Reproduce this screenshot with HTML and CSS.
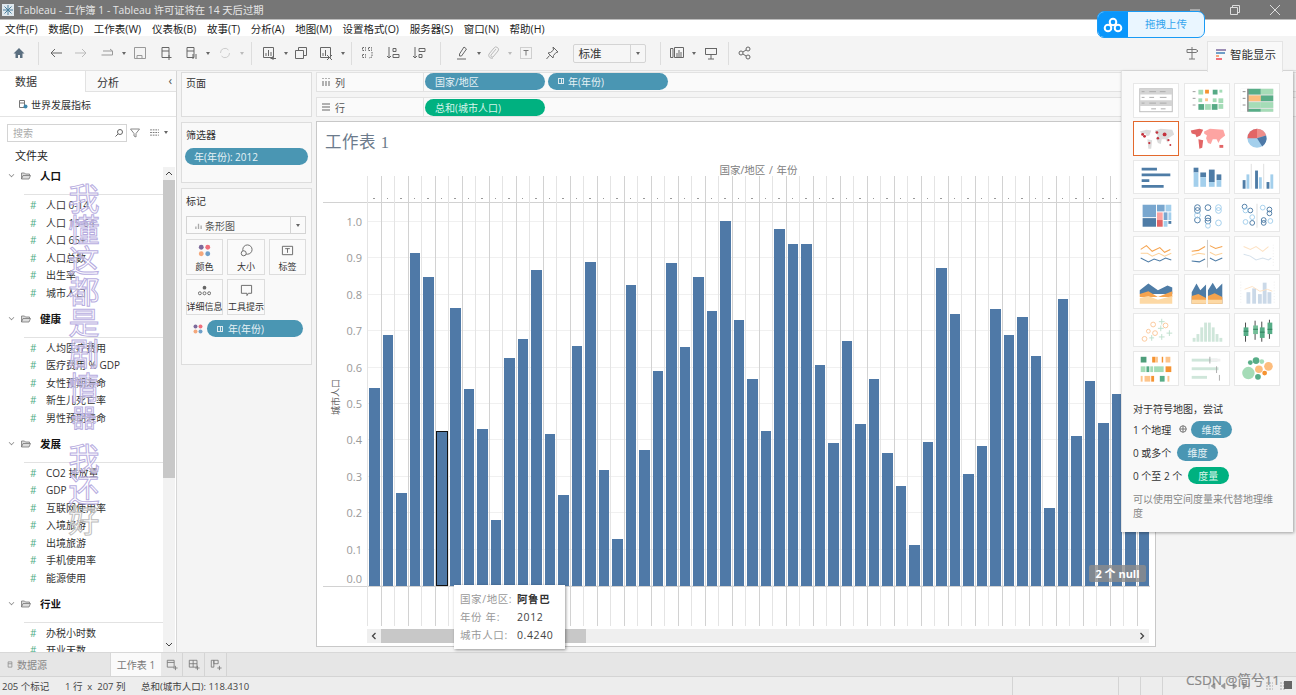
FILE: index.html
```html
<!DOCTYPE html>
<html lang="zh">
<head>
<meta charset="utf-8">
<title>Tableau - 工作簿 1</title>
<link rel="stylesheet" href="styles.css">
</head>
<body>
<div class="app">
  <header class="titlebar">
    <svg class="appicon" viewBox="0 0 12 12"><rect width="12" height="12" fill="#dfe8ee"/><path d="M6 1v10M1 6h10M2.5 2.5l7 7M9.500 2.500l-7 7" stroke="#4a7f9c" stroke-width="1"/></svg>
    <span class="titletext">Tableau - 工作簿 1 - Tableau 许可证将在 14 天后过期</span>
    <div class="winctl">
      <svg class="winbtn" viewBox="0 0 12 12"><path d="M1 6h10" stroke="#ddd"/></svg>
      <svg class="winbtn" viewBox="0 0 12 12"><path d="M1.500 3.500h7v7h-7zM3.500 3.500v-2h7v7h-2" fill="none" stroke="#ddd"/></svg>
      <svg class="winbtn" viewBox="0 0 12 12"><path d="M1 1l10 10M11 1L1 11" stroke="#ddd"/></svg>
    </div>
  </header>
  <nav class="menubar">
    <span>文件(F)</span><span>数据(D)</span><span>工作表(W)</span><span>仪表板(B)</span><span>故事(T)</span><span>分析(A)</span><span>地图(M)</span><span>设置格式(O)</span><span>服务器(S)</span><span>窗口(N)</span><span>帮助(H)</span>
  </nav>
  <div class="toolbar">
    <span class="tb home"><svg viewBox="0 0 14 14"><path d="M7 2L1.500 7.500H3.500V12H6V9h2v3h2.500V7.500h2z" fill="#5b6f80"/></svg></span>
    <i class="sep"></i>
    <span class="tb"><svg viewBox="0 0 14 14"><path d="M13 7H2M6 3L2 7l4 4" fill="none" stroke="#666"/></svg></span>
    <span class="tb"><svg viewBox="0 0 14 14"><path d="M1 7h11M8 3l4 4-4 4" fill="none" stroke="#bbb"/></svg></span>
    <span class="tb"><svg viewBox="0 0 14 14"><path d="M3 5h9.500v4H1.500M10 3l2.500 2" fill="none" stroke="#999"/></svg></span><b class="cr"></b>
    <span class="tb"><svg viewBox="0 0 14 14"><path d="M1.500 1.500h11v11h-11zM4 12.500v-3h5v3" fill="none" stroke="#999"/></svg></span>
    <span class="tb"><svg viewBox="0 0 14 14"><path d="M3 1.500h7v10H3zM3 5h7M10 9v5M7.500 11.500h5" fill="none" stroke="#666"/></svg></span>
    <span class="tb"><svg viewBox="0 0 14 14"><path d="M3 1.500h7v10H3zM3 5h7M9 8v5M12 8v5" fill="none" stroke="#666"/></svg></span><b class="cr"></b>
    <span class="tb"><svg viewBox="0 0 14 14"><path d="M2.500 7a4.500 4.500 0 0 1 8-3M11.500 7a4.500 4.500 0 0 1-8 3" fill="none" stroke="#ccc"/></svg></span><b class="cr lt"></b>
    <i class="sep s2"></i>
    <span class="tb"><svg viewBox="0 0 14 14"><path d="M1.500 1.500h10v10h-10zM4 10V7M6.500 10V4M9 10V6M11 10v4.500M8.500 12.500h5.500" fill="none" stroke="#666"/></svg></span><b class="cr"></b>
    <span class="tb tight"><svg viewBox="0 0 14 14"><path d="M1.500 4.500h8v8h-8zM4.500 4.500v-3h8v8h-3" fill="none" stroke="#666"/></svg></span>
    <span class="tb"><svg viewBox="0 0 14 14"><path d="M1.500 1.500h10v10h-10zM4 10V7M6.500 10V4M8 9l5 5M13 9l-5 5" fill="none" stroke="#666"/></svg></span><b class="cr"></b>
    <i class="sep s3"></i>
    <span class="tb"><svg viewBox="0 0 14 14"><path d="M1.500 1.500h3v3h-3zM7.500 1.500h3v3h-3zM1.500 8.500h3v3h-3zM11 6v5l-3 1" fill="none" stroke="#666" stroke-dasharray="1.500 1"/></svg></span>
    <span class="tb"><svg viewBox="0 0 14 14"><path d="M3 1v11M1 10l2 2 2-2M7 2.500h3v3H7zM7 8.500h6v3H7z" fill="none" stroke="#666"/></svg></span>
    <span class="tb"><svg viewBox="0 0 14 14"><path d="M3 1v11M1 10l2 2 2-2M7 2.500h6v3H7zM7 8.500h3v3H7z" fill="none" stroke="#666"/></svg></span>
    <i class="sep s4"></i>
    <span class="tb"><svg viewBox="0 0 14 14"><path d="M9 1l2.500 2-5 7H4.500V8zM2 13h9" fill="none" stroke="#666"/></svg></span><b class="cr"></b>
    <span class="tb tight3"><svg viewBox="0 0 14 14"><path d="M10 3L5 9a1.500 1.500 0 0 0 2 2l5-6a2.500 2.500 0 0 0-4-3L3 8a3 3 0 0 0 4 4" fill="none" stroke="#bbb"/></svg></span><b class="cr lt"></b>
    <span class="tb"><svg viewBox="0 0 14 14"><path d="M1.500 1.500h11v11h-11z" fill="none" stroke="#aaa" stroke-dasharray="1 1"/><path d="M4.500 4.500h5M7 4.500v5" fill="none" stroke="#777"/></svg></span>
    <span class="tb"><svg viewBox="0 0 14 14"><path d="M8 1l5 5-2 .5-2.500 3-.5 2.500-5-5 2.500-.5 3-2.500zM4.500 9.500L1.500 13" fill="none" stroke="#666"/></svg></span>
    <div class="combo"><span class="combotext">标准</span><span class="combocaret"><b class="cr"></b></span></div>
    <i class="sep"></i>
    <span class="tb"><svg viewBox="0 0 14 14"><path d="M.5 2.500h2.500v9H.5zM4.500 1.500h9v10h-9zM7 11V7M9 11V4M11 11V6" fill="none" stroke="#666"/></svg></span><b class="cr"></b>
    <span class="tb"><svg viewBox="0 0 14 14"><path d="M1.500 2.500h11v6h-11zM7 8.500V13M4 13h6M1 2.500h12" fill="none" stroke="#666"/></svg></span>
    <i class="sep"></i>
    <span class="tb"><svg viewBox="0 0 14 14"><circle cx="3" cy="7" r="2" fill="none" stroke="#666"/><circle cx="10" cy="3" r="2" fill="none" stroke="#666"/><circle cx="10" cy="11" r="2" fill="none" stroke="#666"/><path d="M5 6l3-2M5 8l3 2" stroke="#666"/></svg></span>
    <span class="tb signpost"><svg viewBox="0 0 14 14"><path d="M7 1v12M4 13h6M2 3.500h9l2 1.500-2 1.500H2z" fill="none" stroke="#777"/></svg></span>
  </div>

  <main class="workspace">
    <aside class="datapane">
      <div class="panetabs"><span class="ptab on">数据</span><span class="ptab">分析</span><span class="pcollapse">‹</span></div>
      <div class="source">
        <svg class="srcicon" viewBox="0 0 10 10"><path d="M1.500 1.500h5v7h-5zM1.500 4h5" fill="none" stroke="#777"/><circle cx="7.500" cy="7.500" r="2" fill="#3e87ad"/></svg>
        世界发展指标
      </div>
      <div class="searchrow">
        <div class="search"><span>搜索</span>
          <svg viewBox="0 0 10 10"><circle cx="6" cy="4" r="2.500" fill="none" stroke="#666"/><path d="M4 6L1.500 8.500" stroke="#666"/></svg>
        </div>
        <svg class="funnel" viewBox="0 0 10 10"><path d="M.5 1h9L6 5.500V9L4 8V5.500z" fill="none" stroke="#888"/></svg>
        <svg class="viewicon" viewBox="0 0 10 8"><path d="M0 1h2M3 1h7M0 4h2M3 4h7M0 7h2M3 7h7" stroke="#666" stroke-dasharray="2 1"/></svg>
        <b class="cr"></b>
      </div>
      <div class="folderhead">文件夹</div>
      <div class="treewrap">
        <div class="tree">
          <section class="group">
            <h3 class="ghead"><i class="chev"></i><svg class="folder" viewBox="0 0 10 8"><path d="M.5 7V1h3l1 1h4v1.500M.5 7l1.500-3.500h7.500L8 7z" fill="#ddd" stroke="#777" stroke-width=".8"/></svg>人口</h3>
            <ul class="items"><li>人口 0-14</li><li>人口 15-64</li><li>人口 65+</li><li>人口总数</li><li>出生率</li><li>城市人口</li></ul>
          </section>
          <section class="group">
            <h3 class="ghead"><i class="chev"></i><svg class="folder" viewBox="0 0 10 8"><path d="M.5 7V1h3l1 1h4v1.500M.5 7l1.500-3.500h7.500L8 7z" fill="#ddd" stroke="#777" stroke-width=".8"/></svg>健康</h3>
            <ul class="items"><li>人均医疗费用</li><li>医疗费用 % GDP</li><li>女性预期寿命</li><li>新生儿死亡率</li><li>男性预期寿命</li></ul>
          </section>
          <section class="group">
            <h3 class="ghead"><i class="chev"></i><svg class="folder" viewBox="0 0 10 8"><path d="M.5 7V1h3l1 1h4v1.500M.5 7l1.500-3.500h7.500L8 7z" fill="#ddd" stroke="#777" stroke-width=".8"/></svg>发展</h3>
            <ul class="items"><li>CO2 排放量</li><li>GDP</li><li>互联网使用率</li><li>入境旅游</li><li>出境旅游</li><li>手机使用率</li><li>能源使用</li></ul>
          </section>
          <section class="group">
            <h3 class="ghead"><i class="chev"></i><svg class="folder" viewBox="0 0 10 8"><path d="M.5 7V1h3l1 1h4v1.500M.5 7l1.500-3.500h7.500L8 7z" fill="#ddd" stroke="#777" stroke-width=".8"/></svg>行业</h3>
            <ul class="items"><li>办税小时数</li><li>开业天数</li></ul>
          </section>
        </div>
        <div class="vscroll">
          <svg viewBox="0 0 8 5"><path d="M1 4l3-3 3 3" fill="none" stroke="#444"/></svg>
          <div class="vtrack"><div class="vthumb"></div></div>
          <svg viewBox="0 0 8 5"><path d="M1 1l3 3 3-3" fill="none" stroke="#444"/></svg>
        </div>
      </div>
    </aside>

    <div class="cardrail">
      <section class="card pages"><h4>页面</h4></section>
      <section class="card filters"><h4>筛选器</h4><div class="pill blue filterpill">年(年份): 2012</div></section>
      <section class="card marks">
        <h4>标记</h4>
        <div class="marktype">
          <svg viewBox="0 0 8 8"><path d="M1 8V5M4 8V2M7 8V4" stroke="#aaa" stroke-width="1.500"/></svg>
          <span>条形图</span><span class="mtcaret"><b class="cr"></b></span>
        </div>
        <div class="markgrid">
          <div class="mbtn"><svg viewBox="0 0 14 14"><circle cx="3.500" cy="3.500" r="2.600" fill="#7d6a9b"/><circle cx="10.500" cy="3.500" r="2.600" fill="#ef6f7c"/><circle cx="3.500" cy="10.500" r="2.600" fill="#f4a87c"/><circle cx="10.500" cy="10.500" r="2.600" fill="#6f9fc8"/></svg>颜色</div>
          <div class="mbtn"><svg viewBox="0 0 14 14"><circle cx="8" cy="6" r="5" fill="none" stroke="#666"/><circle cx="4" cy="10" r="2.700" fill="#f9f9f9" stroke="#666"/></svg>大小</div>
          <div class="mbtn"><svg viewBox="0 0 14 14"><path d="M1.500 2.500h11v9h-11z" fill="none" stroke="#666"/><path d="M4.500 5h5M7 5v4.500" stroke="#666"/></svg>标签</div>
          <div class="mbtn"><svg viewBox="0 0 14 14"><circle cx="7" cy="4" r="2" fill="#666"/><circle cx="2" cy="10" r="1.600" fill="none" stroke="#666"/><circle cx="7" cy="10" r="1.600" fill="none" stroke="#666"/><circle cx="12" cy="10" r="1.600" fill="none" stroke="#666"/></svg>详细信息</div>
          <div class="mbtn"><svg viewBox="0 0 14 14"><path d="M1.500 1.500h11v8.500H9L7.500 12.500V10h-6z" fill="none" stroke="#666"/></svg>工具提示</div>
        </div>
        <div class="markpill">
          <svg viewBox="0 0 10 10"><circle cx="2.500" cy="2.500" r="2" fill="#7d6a9b"/><circle cx="7.500" cy="2.500" r="2" fill="#ef6f7c"/><circle cx="2.500" cy="7.500" r="2" fill="#f4a87c"/><circle cx="7.500" cy="7.500" r="2" fill="#6f9fc8"/></svg>
          <div class="pill blue mp"><i class="plus"></i>年(年份)</div>
        </div>
      </section>
    </div>

    <div class="center">
      <div class="shelf first"><div class="shelflabel"><svg viewBox="0 0 8 8"><path d="M1 3v5M4 3v5M7 3v5M1 0v1M4 0v1M7 0v1" stroke="#666"/></svg>列</div>
        <div class="pill blue shelfpill">国家/地区</div><div class="pill blue shelfpill"><i class="plus"></i>年(年份)</div></div>
      <div class="shelf"><div class="shelflabel"><svg viewBox="0 0 8 8"><path d="M0 1h8M0 4h8M0 7h8" stroke="#666"/></svg>行</div>
        <div class="pill green shelfpill">总和(城市人口)</div></div>

      <section class="sheet">
        <h2 class="sheettitle">工作表 1</h2>
        <div class="headtitle">国家/地区 <em>/</em> 年份</div>
        <div class="chart">
          <div class="yaxis">
            <div class="yhead"></div>
            <div class="yplot">
              <span class="ytitle">城市人口</span>
              <div class="yticks"><span>1.0</span><span>0.9</span><span>0.8</span><span>0.7</span><span>0.6</span><span>0.5</span><span>0.4</span><span>0.3</span><span>0.2</span><span>0.1</span><span class="zero">0.0</span></div>
            </div>
            <div class="yfoot"></div>
          </div>
          <div class="cols">
            <div class="col"><div class="dot"></div><div class="plot"><div class="bar" style="height:198px"></div></div><div class="foot"></div></div>
            <div class="col"><div class="dot"></div><div class="plot"><div class="bar" style="height:251px"></div></div><div class="foot"></div></div>
            <div class="col"><div class="dot"></div><div class="plot"><div class="bar" style="height:93px"></div></div><div class="foot"></div></div>
            <div class="col"><div class="dot"></div><div class="plot"><div class="bar" style="height:333px"></div></div><div class="foot"></div></div>
            <div class="col"><div class="dot"></div><div class="plot"><div class="bar" style="height:309px"></div></div><div class="foot"></div></div>
            <div class="col"><div class="dot"></div><div class="plot"><div class="bar sel" style="height:155px"></div></div><div class="foot"></div></div>
            <div class="col"><div class="dot"></div><div class="plot"><div class="bar" style="height:278px"></div></div><div class="foot"></div></div>
            <div class="col"><div class="dot"></div><div class="plot"><div class="bar" style="height:197px"></div></div><div class="foot"></div></div>
            <div class="col"><div class="dot"></div><div class="plot"><div class="bar" style="height:157px"></div></div><div class="foot"></div></div>
            <div class="col"><div class="dot"></div><div class="plot"><div class="bar" style="height:66px"></div></div><div class="foot"></div></div>
            <div class="col"><div class="dot"></div><div class="plot"><div class="bar" style="height:228px"></div></div><div class="foot"></div></div>
            <div class="col"><div class="dot"></div><div class="plot"><div class="bar" style="height:247px"></div></div><div class="foot"></div></div>
            <div class="col"><div class="dot"></div><div class="plot"><div class="bar" style="height:316px"></div></div><div class="foot"></div></div>
            <div class="col"><div class="dot"></div><div class="plot"><div class="bar" style="height:152px"></div></div><div class="foot"></div></div>
            <div class="col"><div class="dot"></div><div class="plot"><div class="bar" style="height:91px"></div></div><div class="foot"></div></div>
            <div class="col"><div class="dot"></div><div class="plot"><div class="bar" style="height:240px"></div></div><div class="foot"></div></div>
            <div class="col"><div class="dot"></div><div class="plot"><div class="bar" style="height:324px"></div></div><div class="foot"></div></div>
            <div class="col"><div class="dot"></div><div class="plot"><div class="bar" style="height:116px"></div></div><div class="foot"></div></div>
            <div class="col"><div class="dot"></div><div class="plot"><div class="bar" style="height:47px"></div></div><div class="foot"></div></div>
            <div class="col"><div class="dot"></div><div class="plot"><div class="bar" style="height:301px"></div></div><div class="foot"></div></div>
            <div class="col"><div class="dot"></div><div class="plot"><div class="bar" style="height:136px"></div></div><div class="foot"></div></div>
            <div class="col"><div class="dot"></div><div class="plot"><div class="bar" style="height:215px"></div></div><div class="foot"></div></div>
            <div class="col"><div class="dot"></div><div class="plot"><div class="bar" style="height:323px"></div></div><div class="foot"></div></div>
            <div class="col"><div class="dot"></div><div class="plot"><div class="bar" style="height:239px"></div></div><div class="foot"></div></div>
            <div class="col"><div class="dot"></div><div class="plot"><div class="bar" style="height:309px"></div></div><div class="foot"></div></div>
            <div class="col"><div class="dot"></div><div class="plot"><div class="bar" style="height:275px"></div></div><div class="foot"></div></div>
            <div class="col"><div class="dot"></div><div class="plot"><div class="bar" style="height:365px"></div></div><div class="foot"></div></div>
            <div class="col"><div class="dot"></div><div class="plot"><div class="bar" style="height:266px"></div></div><div class="foot"></div></div>
            <div class="col"><div class="dot"></div><div class="plot"><div class="bar" style="height:207px"></div></div><div class="foot"></div></div>
            <div class="col"><div class="dot"></div><div class="plot"><div class="bar" style="height:155px"></div></div><div class="foot"></div></div>
            <div class="col"><div class="dot"></div><div class="plot"><div class="bar" style="height:357px"></div></div><div class="foot"></div></div>
            <div class="col"><div class="dot"></div><div class="plot"><div class="bar" style="height:342px"></div></div><div class="foot"></div></div>
            <div class="col"><div class="dot"></div><div class="plot"><div class="bar" style="height:342px"></div></div><div class="foot"></div></div>
            <div class="col"><div class="dot"></div><div class="plot"><div class="bar" style="height:221px"></div></div><div class="foot"></div></div>
            <div class="col"><div class="dot"></div><div class="plot"><div class="bar" style="height:143px"></div></div><div class="foot"></div></div>
            <div class="col"><div class="dot"></div><div class="plot"><div class="bar" style="height:245px"></div></div><div class="foot"></div></div>
            <div class="col"><div class="dot"></div><div class="plot"><div class="bar" style="height:162px"></div></div><div class="foot"></div></div>
            <div class="col"><div class="dot"></div><div class="plot"><div class="bar" style="height:207px"></div></div><div class="foot"></div></div>
            <div class="col"><div class="dot"></div><div class="plot"><div class="bar" style="height:133px"></div></div><div class="foot"></div></div>
            <div class="col"><div class="dot"></div><div class="plot"><div class="bar" style="height:100px"></div></div><div class="foot"></div></div>
            <div class="col"><div class="dot"></div><div class="plot"><div class="bar" style="height:41px"></div></div><div class="foot"></div></div>
            <div class="col"><div class="dot"></div><div class="plot"><div class="bar" style="height:144px"></div></div><div class="foot"></div></div>
            <div class="col"><div class="dot"></div><div class="plot"><div class="bar" style="height:318px"></div></div><div class="foot"></div></div>
            <div class="col"><div class="dot"></div><div class="plot"><div class="bar" style="height:272px"></div></div><div class="foot"></div></div>
            <div class="col"><div class="dot"></div><div class="plot"><div class="bar" style="height:112px"></div></div><div class="foot"></div></div>
            <div class="col"><div class="dot"></div><div class="plot"><div class="bar" style="height:140px"></div></div><div class="foot"></div></div>
            <div class="col"><div class="dot"></div><div class="plot"><div class="bar" style="height:277px"></div></div><div class="foot"></div></div>
            <div class="col"><div class="dot"></div><div class="plot"><div class="bar" style="height:251px"></div></div><div class="foot"></div></div>
            <div class="col"><div class="dot"></div><div class="plot"><div class="bar" style="height:269px"></div></div><div class="foot"></div></div>
            <div class="col"><div class="dot"></div><div class="plot"><div class="bar" style="height:230px"></div></div><div class="foot"></div></div>
            <div class="col"><div class="dot"></div><div class="plot"><div class="bar" style="height:78px"></div></div><div class="foot"></div></div>
            <div class="col"><div class="dot"></div><div class="plot"><div class="bar" style="height:287px"></div></div><div class="foot"></div></div>
            <div class="col"><div class="dot"></div><div class="plot"><div class="bar" style="height:150px"></div></div><div class="foot"></div></div>
            <div class="col"><div class="dot"></div><div class="plot"><div class="bar" style="height:205px"></div></div><div class="foot"></div></div>
            <div class="col"><div class="dot"></div><div class="plot"><div class="bar" style="height:163px"></div></div><div class="foot"></div></div>
            <div class="col"><div class="dot"></div><div class="plot"><div class="bar" style="height:192px"></div></div><div class="foot"></div></div>
            <div class="col"><div class="dot"></div><div class="plot"><div class="bar" style="height:180px"></div></div><div class="foot"></div></div>
            <div class="col"><div class="dot"></div><div class="plot"><div class="bar" style="height:170px"></div></div><div class="foot"></div></div>
          </div>
          <div class="nullbadge">2 个 null</div>
        </div>
        <div class="hscroll">
          <span class="harrow"><svg viewBox="0 0 6 8"><path d="M4.500 1L1.500 4l3 3" fill="none" stroke="#444" stroke-width="1.300"/></svg></span>
          <div class="hthumb"></div>
          <span class="harrow end"><svg viewBox="0 0 6 8"><path d="M1.500 1l3 3-3 3" fill="none" stroke="#444" stroke-width="1.300"/></svg></span>
        </div>
      </section>
    </div>
  </main>

  <div class="tabbar">
    <span class="dstab"><svg viewBox="0 0 8 10"><path d="M1.500 1.500h5v7h-5zM1.500 4h5" fill="none" stroke="#888"/></svg>数据源</span>
    <span class="sheettab">工作表 1</span>
    <span class="newtab"><svg viewBox="0 0 14 14"><path d="M1.500 1.500h8v8h-8zM1.500 4h8M11 8v5M8.500 10.500h5" fill="none" stroke="#777"/></svg></span>
    <span class="newtab"><svg viewBox="0 0 14 14"><path d="M1.500 1.500h9v8h-9zM1.500 5.500h9M6 1.500v8M11 8v5M8.500 10.500h5" fill="none" stroke="#777"/></svg></span>
    <span class="newtab"><svg viewBox="0 0 14 14"><path d="M1.500 1.500h3v8h-3zM4.500 1.500h5v4h-5zM11 8v5M8.500 10.500h5" fill="none" stroke="#777"/></svg></span>
  </div>
  <footer class="statusbar">
    <span class="st1">205 个标记</span><span class="st2">1 行  x  207 列</span><span class="st3">总和(城市人口): 118.4310</span>
    <span class="stsp"></span><i class="stdiv d1"></i><i class="stdiv d2"></i><i class="stdiv d3"></i><i class="stdiv d4"></i>
    <svg class="stnav" viewBox="0 0 78 8"><path d="M1 1v6M7 1L3 4l4 3zM17 1l-4 3 4 3zM25 1l4 3-4 3zM35 1l4 3-4 3zM41 1v6" fill="#999" stroke="#999" stroke-width=".6"/><path d="M58 1h7M58 4h7M58 7h7M72 1h6M72 4h6M72 7h6" stroke="#aaa" stroke-dasharray="2 1"/></svg>
    <span class="stsquare"></span>
  </footer>

  <!-- overlays -->
  <div class="upload">
    <span class="upicon"><svg viewBox="0 0 20 16"><circle cx="10" cy="5" r="3.300" fill="none" stroke="#fff" stroke-width="2"/><circle cx="5" cy="11" r="3.300" fill="none" stroke="#fff" stroke-width="2"/><circle cx="15" cy="11" r="3.300" fill="none" stroke="#fff" stroke-width="2"/></svg></span>
    <span class="uptext">拖拽上传</span>
  </div>

  <aside class="showme">
    <div class="smtab"><svg viewBox="0 0 10 12"><path d="M0 1h10V3H0z" fill="#9c8db5"/><path d="M0 4h9v2H0z" fill="#6f9fc8"/><path d="M0 7h3v2H0z" fill="#f4a87c"/><path d="M0 10h6v2H0z" fill="#ef6f7c"/></svg>智能显示</div>
    <div class="smbody">
      <div class="tiles">
        <div class="tile"><svg viewBox="0 0 46 34"><rect x="6" y="5" width="34" height="24" fill="#fff" stroke="#bbb"/><rect x="6" y="5" width="34" height="6" fill="#d4d4d4"/><rect x="6" y="17" width="34" height="6" fill="#d4d4d4"/><path d="M8 8h3M16 8h7M27 8h6M8 14h3M16 14h5M27 14h7M8 20h3M16 20h7M27 20h7M18 26h5M28 26h5" stroke="#aaa"/></svg></div>
        <div class="tile"><svg viewBox="0 0 46 34"><path d="M8 8h3M8 15h3M8 22h3" stroke="#999"/><rect x="14" y="6" width="5" height="5" fill="#a5dcb7"/><rect x="21" y="6" width="4" height="4" fill="#f59331"/><rect x="29" y="6" width="5" height="5" fill="#55aa85"/><rect x="36" y="6" width="3" height="3" fill="#a5dcb7"/><rect x="14" y="15" width="4" height="4" fill="#a5dcb7"/><rect x="21" y="15" width="3" height="3" fill="#fdc58c"/><rect x="29" y="15" width="4" height="4" fill="#a5dcb7"/><rect x="35" y="15" width="5" height="5" fill="#a5dcb7"/><rect x="14" y="21" width="6" height="6" fill="#55aa85"/><rect x="21" y="21" width="6" height="6" fill="#a5dcb7"/><rect x="28" y="21" width="6" height="6" fill="#55aa85"/><rect x="35" y="21" width="5" height="5" fill="#a5dcb7"/></svg></div>
        <div class="tile"><svg viewBox="0 0 46 34"><rect x="6" y="5" width="34" height="24" fill="#e4e4e4"/><rect x="14" y="5" width="13" height="6" fill="#57ad87"/><rect x="27" y="5" width="13" height="6" fill="#a5dcb7"/><rect x="14" y="12" width="13" height="6" fill="#fdbd7d"/><rect x="27" y="12" width="13" height="6" fill="#57ad87"/><rect x="14" y="19" width="13" height="6" fill="#a5dcb7"/><rect x="27" y="19" width="13" height="6" fill="#a5dcb7"/><rect x="14" y="26" width="13" height="3" fill="#57ad87"/><rect x="27" y="26" width="13" height="3" fill="#a5dcb7"/><rect x="6" y="5" width="7" height="24" fill="#fff"/><path d="M13.500 5v24" stroke="#555"/><path d="M8 8h3M8 15h3M8 22h3" stroke="#888"/></svg></div>
        <div class="tile selected"><svg viewBox="0 0 46 34"><path d="M6 10l7-2 5 1-2 5-3 1-1-3-3 1zM14 18l5 1-1 9-3 0zM22 9l6-2 12 1 2 5-6 4-1 5-2-4-4 0-1 5-3-1-2-5 2-3-3-3z" fill="#dcdcdc"/><g fill="#c4323d"><circle cx="9" cy="13" r="1.500"/><circle cx="11" cy="15" r="1.500"/><circle cx="24" cy="11" r="1.400"/><circle cx="32" cy="13" r="2"/><circle cx="25" cy="17" r="1.300"/><circle cx="16" cy="22" r="1.200"/><circle cx="38" cy="24" r="1"/><circle cx="36" cy="19" r="1.200"/></g></svg></div>
        <div class="tile"><svg viewBox="0 0 46 34"><path d="M6 9l9-2 4 1-3 6-4 2-1-3-4-1z" fill="#e26566"/><path d="M14 18l5 1-1 8-3 1z" fill="#e26566"/><path d="M20 10l6-3 14 1 2 6-5 4-2 4-2-4-4 0-2 5-3-1-2-5 1-3-3-2z" fill="#fda4a2"/><path d="M36 24h4v3h-4z" fill="#e26566"/></svg></div>
        <div class="tile"><svg viewBox="0 0 46 34"><circle cx="23" cy="17" r="10" fill="#a3cfec"/><path d="M23 17V7a10 10 0 0 1 9.500 7z" fill="#ee8d8a"/><path d="M23 17l9.500-3a10 10 0 0 1-4 11.500z" fill="#4e79a7"/><path d="M23 17H13a10 10 0 0 1 10-10z" fill="#e26566"/></svg></div>
        <div class="tile"><svg viewBox="0 0 46 34"><path d="M8 7h16v3H8zM8 13h30v3H8zM8 19h8v3H8zM8 25h23v3H8z" fill="#4e7ca6"/></svg></div>
        <div class="tile"><svg viewBox="0 0 46 34"><rect x="9" y="7" width="5" height="5" fill="#4e7ca6"/><rect x="9" y="12" width="5" height="15" fill="#a3cfec"/><rect x="16" y="12" width="6" height="5" fill="#4e7ca6"/><rect x="16" y="17" width="6" height="10" fill="#a3cfec"/><rect x="25" y="9" width="6" height="13" fill="#4e7ca6"/><rect x="25" y="22" width="6" height="5" fill="#a3cfec"/><rect x="33" y="14" width="5" height="6" fill="#4e7ca6"/><rect x="33" y="20" width="5" height="7" fill="#a3cfec"/></svg></div>
        <div class="tile"><svg viewBox="0 0 46 34"><path d="M17 3v26M30 3v26" stroke="#ddd"/><rect x="8" y="20" width="3" height="9" fill="#4e7ca6"/><rect x="12" y="14" width="3" height="15" fill="#a3cfec"/><rect x="21" y="10" width="3" height="19" fill="#4e7ca6"/><rect x="25" y="17" width="3" height="12" fill="#a3cfec"/><rect x="33" y="22" width="3" height="7" fill="#4e7ca6"/><rect x="37" y="14" width="3" height="15" fill="#a3cfec"/></svg></div>
        <div class="tile"><svg viewBox="0 0 46 34"><rect x="9" y="6" width="14" height="13" fill="#79a7cf"/><rect x="9" y="20" width="14" height="9" fill="#4e7ca6"/><rect x="24" y="6" width="8" height="7" fill="#79a7cf"/><rect x="33" y="6" width="6" height="7" fill="#a3cfec"/><rect x="24" y="14" width="6" height="8" fill="#fda4a2"/><rect x="24" y="22" width="6" height="7" fill="#e26566"/><rect x="31" y="14" width="4" height="8" fill="#79a7cf"/><rect x="36" y="14" width="3" height="8" fill="#a3cfec"/><rect x="31" y="23" width="4" height="6" fill="#a3cfec"/><rect x="36" y="23" width="3" height="3" fill="#4e7ca6"/></svg></div>
        <div class="tile"><svg viewBox="0 0 46 34" fill="none" stroke-width="1"><g stroke="#4e7ca6"><circle cx="13" cy="9" r="3"/><circle cx="13" cy="12" r="3"/><circle cx="13" cy="22" r="3"/><circle cx="24" cy="9" r="3"/><circle cx="24" cy="20" r="3"/><circle cx="24" cy="23" r="3"/></g><g stroke="#a3cfec"><circle cx="35" cy="9" r="3"/><circle cx="35" cy="12" r="3"/><circle cx="35" cy="25" r="3"/><circle cx="13" cy="17" r="3"/><circle cx="24" cy="28" r="2.500"/></g></svg></div>
        <div class="tile"><svg viewBox="0 0 46 34" fill="none"><path d="M23 5v25" stroke="#ddd"/><g stroke="#4e7ca6"><circle cx="10" cy="8" r="2.500"/><circle cx="16" cy="12" r="2.500"/><circle cx="18" cy="25" r="2.500"/><circle cx="36" cy="11" r="2.500"/><circle cx="36" cy="15" r="2.500"/><circle cx="30" cy="22" r="2.500"/><circle cx="30" cy="25" r="2.500"/></g><g stroke="#a3cfec"><circle cx="11" cy="12" r="2.500"/><circle cx="18" cy="19" r="2.500"/><circle cx="11" cy="24" r="2.500"/><circle cx="29" cy="9" r="2.500"/><circle cx="37" cy="23" r="2.500"/></g></svg></div>
        <div class="tile"><svg viewBox="0 0 46 34" fill="none" stroke-width="1.100"><path d="M7 13l6-4 6 6 8-4 5 5 6-3" stroke="#f5a34e"/><path d="M7 17l7 0 5 3 7-3 6 3 7-3" stroke="#fdd19a"/><path d="M7 22l8 4 6-3 6 2 6-3 6 2" stroke="#4e7ca6"/></svg></div>
        <div class="tile"><svg viewBox="0 0 46 34" fill="none" stroke-width="1.100"><path d="M23.500 3v29" stroke="#ccc"/><path d="M7 15l7-1 7-4M26 9l6 3 7-2" stroke="#f5a34e"/><path d="M7 19l7-2 7 1M26 16l6 3 7-2" stroke="#fdd19a"/><path d="M7 25l8 1 6-3M26 22l6 3 7-3" stroke="#4e7ca6"/></svg></div>
        <div class="tile"><svg viewBox="0 0 46 34" fill="none" stroke-width="1.100"><path d="M9 10l7 3 6-3 7 5 6-5" stroke="#fde2c4"/><path d="M9 18l7 2 6 4 7-2 6 2 3-2" stroke="#d5e1ec"/><path d="M40 8v22" stroke="#eee" stroke-dasharray="1 2"/></svg></div>
        <div class="tile"><svg viewBox="0 0 46 34"><path d="M6 16l9-7 10 7 10-5 5 2v7H6z" fill="#4e7ca6"/><path d="M6 20l9-3 10 6 15-6v6H6z" fill="#f5a34e"/><path d="M6 24l9-2 10 4 15-4v8H6z" fill="#fdd9a5"/></svg></div>
        <div class="tile"><svg viewBox="0 0 46 34"><path d="M7 18l5-9 4 7 6-6v20H7zM24 16l5-8 4 7 6-6v21H24z" fill="#4e7ca6"/><path d="M7 22l7-2 8 4v6H7zM24 22l7-3 8 4v7H24z" fill="#f5a34e"/><path d="M7 26h15v4H7zM24 26h15v4H24z" fill="#fdd9a5"/></svg></div>
        <div class="tile"><svg viewBox="0 0 46 34"><path d="M6 7v23M41 7v23" stroke="#eee" stroke-dasharray="1 2"/><g fill="#cbd9e8"><rect x="12" y="18" width="4" height="12"/><rect x="18" y="14" width="4" height="16"/><rect x="24" y="20" width="4" height="10"/><rect x="29" y="8" width="4" height="22"/><rect x="34" y="18" width="4" height="12"/></g><path d="M10 15l8-3 8 5 8-2 5 2" fill="none" stroke="#fde2c4"/></svg></div>
        <div class="tile"><svg viewBox="0 0 46 34" fill="none"><g stroke="#fbc79a"><circle cx="11" cy="26" r="2.500"/><circle cx="15" cy="18" r="2"/><circle cx="20" cy="11" r="2.500"/><circle cx="22" cy="20" r="2.500"/><circle cx="33" cy="12" r="2.500"/></g><g stroke="#bfe0cd"><path d="M26 8h6M29 5v6M34 20h6M37 17v6M25 15h6M28 12v6M16 25h5M18.500 22v6M26 24h6M29 21v6"/></g></svg></div>
        <div class="tile"><svg viewBox="0 0 46 34"><g fill="#cfe6da"><rect x="8" y="25" width="3" height="4"/><rect x="12" y="21" width="3" height="8"/><rect x="16" y="14" width="3" height="15"/><rect x="20" y="9" width="3" height="20"/><rect x="24" y="9" width="3" height="20"/><rect x="28" y="14" width="3" height="15"/><rect x="32" y="21" width="3" height="8"/><rect x="36" y="25" width="3" height="4"/></g></svg></div>
        <div class="tile"><svg viewBox="0 0 46 34"><path d="M11 9v20M21 7v20M28 8v21M36 6v20" stroke="#444"/><rect x="9" y="14" width="5" height="9" fill="#57ad87"/><rect x="19" y="12" width="5" height="9" fill="#73bd97"/><rect x="26" y="14" width="5" height="11" fill="#57ad87"/><rect x="34" y="9" width="5" height="12" fill="#57ad87"/><path d="M9 18h5M19 16h5M26 19h5M34 16h5" stroke="#2e7d5a"/></svg></div>
        <div class="tile"><svg viewBox="0 0 46 34"><rect x="7" y="5" width="6" height="6" fill="#4f9e7b"/><rect x="19" y="5" width="3" height="6" fill="#f59331"/><rect x="22" y="5" width="3" height="6" fill="#fdc58c"/><rect x="29" y="5" width="1.500" height="6" fill="#f59331"/><rect x="33" y="5" width="5" height="6" fill="#fdc58c"/><rect x="7" y="15" width="5" height="6" fill="#a5dcb7"/><rect x="13" y="15" width="3" height="6" fill="#57ad87"/><rect x="17" y="15" width="3" height="6" fill="#a5dcb7"/><rect x="21" y="15" width="10" height="6" fill="#a5dcb7"/><rect x="33" y="15" width="6" height="6" fill="#f59331"/><rect x="7" y="25" width="2" height="6" fill="#fdc58c"/><rect x="11" y="25" width="6" height="6" fill="#fdc58c"/><rect x="18" y="25" width="3" height="6" fill="#f59331"/><rect x="27" y="25" width="5" height="6" fill="#57ad87"/><rect x="35" y="25" width="2" height="6" fill="#fdc58c"/></svg></div>
        <div class="tile"><svg viewBox="0 0 46 34"><rect x="7" y="7" width="27" height="3" fill="#cfe6da"/><rect x="7" y="16" width="28" height="3" fill="#cfe6da"/><rect x="7" y="25" width="16" height="3" fill="#cfe6da"/><path d="M26 5v7M33 15v7M36 24v6" stroke="#aaa"/><rect x="27" y="7" width="10" height="3" fill="#f0f0f0"/></svg></div>
        <div class="tile"><svg viewBox="0 0 46 34"><circle cx="14" cy="22" r="6.500" fill="#a5dcb7"/><circle cx="16" cy="11" r="2.500" fill="#57ad87"/><circle cx="22" cy="9" r="3.500" fill="#57ad87"/><circle cx="28" cy="10" r="2.500" fill="#a5dcb7"/><circle cx="25" cy="18" r="4" fill="#fdbd7d"/><circle cx="35" cy="15" r="4.500" fill="#fdbd7d"/><circle cx="31" cy="22" r="2.500" fill="#f59331"/><circle cx="24" cy="26" r="3" fill="#57ad87"/></svg></div>
      </div>
      <div class="smhints">
        <p>对于符号地图，尝试</p>
        <p>1 个地理 <svg class="globe" viewBox="0 0 8 8"><circle cx="4" cy="4" r="3.200" fill="none" stroke="#777"/><path d="M.5 4h7M4 .5v7" stroke="#777"/></svg><span class="pill blue hp">维度</span></p>
        <p>0 或多个 <span class="pill blue hp">维度</span></p>
        <p>0 个至 2 个 <span class="pill green hp">度量</span></p>
      </div>
      <p class="smnote">可以使用空间度量来代替地理维度</p>
    </div>
  </aside>

  <div class="tooltip">
    <div class="tiprow"><span class="tipk">国家/地区:</span><strong>阿鲁巴</strong></div>
    <div class="tiprow"><span class="tipk">年份 年:</span><span>2012</span></div>
    <div class="tiprow"><span class="tipk">城市人口:</span><span>0.4240</span></div>
  </div>

  <div class="wm wm1"><span>我</span><span>懂</span><span>这</span><span>都</span><span>是</span><span>剧</span><span class="drop">情</span><span class="squeeze">器</span></div>
  <div class="wm wm2"><span>我</span><span>还</span><span>好</span></div>
  <div class="csdn">CSDN @简兮11</div>
</div>
</body>
</html>
```

FILE: styles.css
```css
* { box-sizing: border-box; }
html, body { margin: 0; padding: 0; }
body { width: 1296px; height: 695px; overflow: hidden; font-family: "Open Sans", "Noto Sans CJK SC", sans-serif; font-size: 10px; color: #333; background: #f4f4f4; }
h2, h3, h4, p, ul { margin: 0; padding: 0; font-weight: normal; }
ul { list-style: none; }
svg { display: block; }
.app { position: relative; width: 1296px; height: 695px; display: flex; flex-direction: column; overflow: hidden; }

/* title + menu */
.titlebar { height: 20px; flex: none; background: #767676; border-bottom: 1px solid #bdbdbd; display: flex; align-items: center; padding-left: 2px; color: #e6e6e6; font-size: 10.300px; }
.appicon { width: 12px; height: 12px; margin-right: 4px; }
.winctl { margin-left: auto; display: flex; gap: 28px; padding-right: 15px; }
.winbtn { width: 12px; height: 12px; }
.menubar { height: 16px; flex: none; background: #fff; display: flex; gap: 10.700px; padding-left: 5px; align-items: center; font-size: 10.500px; color: #222; }

/* toolbar */
.toolbar { height: 35px; flex: none; background: #f4f4f4; border-bottom: 1px solid #e2e2e2; display: flex; align-items: center; padding-left: 7px; position: relative; }
.tb { width: 25.500px; height: 26px; display: flex; align-items: center; justify-content: center; flex: none; }
.tb svg { width: 14px; height: 14px; }
.tb.home { width: 24px; }
.tb.tight { margin-left: -2px; }
.tb.tight3 { margin-left: -3px; }
.sep { width: 1px; height: 23px; background: #ddd; margin: 0 4px; flex: none; }
.toolbar .sep:first-of-type { margin-left: 7px; }
.sep.s2 { margin: 0 5px; }
.sep.s3 { margin: 0 3px 0 4px; }
.sep.s4 { margin: 0 9px 0 8px; }
.cr { display: block; width: 0; height: 0; border-left: 2.500px solid transparent; border-right: 2.500px solid transparent; border-top: 3px solid #666; flex: none; margin: 0 2px; }
.combocaret .cr, .mtcaret .cr { margin: 0; }
.cr.lt { border-top-color: #bbb; }
.combo { width: 73px; height: 19px; margin: 0 10px 0 8px; border: 1px solid #d4d4d4; border-radius: 2px; display: flex; align-items: center; background: #f6f6f6; font-size: 11.500px; flex: none; }
.combotext { flex: 1; padding-left: 5px; color: #333; }
.combocaret { width: 15px; height: 100%; border-left: 1px solid #d4d4d4; display: flex; align-items: center; justify-content: center; }
.signpost { position: absolute; left: 1179px; top: 4px; }

/* workspace */
.workspace { height: 581px; flex: none; display: flex; background: #f4f4f4; overflow: hidden; }
.datapane { width: 177px; flex: none; background: #fff; border-right: 1px solid #d6d6d6; display: flex; flex-direction: column; }
.panetabs { height: 21px; flex: none; display: flex; align-items: center; font-size: 11px; background: #f9f9f9; border-bottom: 1px solid #e2e2e2; position: relative; }
.ptab { width: 86px; height: 21px; line-height: 23px; padding-left: 11px; flex: none; color: #333; }
.ptab.on { background: #fff; border-right: 1px solid #e2e2e2; height: 22px; padding-left: 15px; }
.pcollapse { position: absolute; right: 4px; top: 1px; color: #555; font-size: 12px; line-height: 18px; }
.source { height: 25px; flex: none; display: flex; align-items: center; padding-left: 18px; gap: 3px; font-size: 10px; border-bottom: 1px solid #e4e4e4; color: #333; }
.srcicon { width: 10px; height: 10px; }
.searchrow { height: 25px; flex: none; display: flex; align-items: center; padding: 6px 0 0 7px; }
.search { width: 120px; height: 18px; border: 1px solid #d4d4d4; display: flex; align-items: center; justify-content: space-between; padding: 0 2px 0 5px; color: #aaa; font-size: 10px; }
.search svg { width: 10px; height: 10px; }
.funnel { width: 10px; height: 10px; margin: 0 4px 0 3px; }
.viewicon { width: 9px; height: 7px; margin: 0 3px 0 6px; padding: 0; }
.folderhead { height: 25px; flex: none; padding: 6px 0 0 15px; font-size: 11px; line-height: 16px; color: #222; }
.treewrap { flex: 1; display: flex; min-height: 0; }
.tree { width: 163px; flex: none; overflow: hidden; }
.group { margin-bottom: 7.500px; }
.ghead { height: 28px; display: flex; align-items: flex-start; line-height: 18px; font-size: 10.500px; font-weight: 700; color: #111; margin-left: 7px; position: relative; }
.ghead::after { content: ""; position: absolute; left: 17px; right: 0; bottom: 0; height: 1px; background: #e2e2e2; }
.chev { width: 5px; height: 5px; border-right: 1px solid #888; border-bottom: 1px solid #888; transform: rotate(45deg) scale(.8); margin: 5px 7px 0 2px; flex: none; }
.folder { width: 10px; height: 8px; margin: 5px 9px 0 0; flex: none; }
.items li { height: 17.500px; line-height: 17.500px; padding-left: 46px; color: #333; position: relative; white-space: nowrap; }
.items li::before { content: "#"; position: absolute; left: 30px; top: 0; color: #4fae88; font-size: 10px; }
.items { padding-top: 2px; }
.vscroll { width: 12px; flex: none; background: #f2f2f2; display: flex; flex-direction: column; align-items: center; }
.vscroll svg { width: 8px; height: 5px; margin: 6px 0; }
.vtrack { flex: 1; width: 100%; }
.vthumb { width: 100%; height: 298px; background: #c8c8c8; }
.vscroll svg:first-child { margin: 4px 0 4px; }
.vscroll svg:last-child { margin: 3px 0 5px; }

/* cards */
.cardrail { width: 139px; flex: none; padding: 1px 4px 0 4px; display: flex; flex-direction: column; gap: 5px; }
.card { background: #f9f9f9; border: 1px solid #ddd; padding: 0 4px; }
.card h4 { font-size: 10px; line-height: 14px; padding-top: 3px; color: #333; }
.pages { height: 45px; }
.filters { height: 61px; padding-top: 0; }
.filters h4 { padding-top: 5px; }
.marks { height: 177px; }
.marks h4 { padding-top: 5px; }
.pill { color: #e6f2f6; border-radius: 9px; font-size: 10px; display: flex; align-items: center; white-space: nowrap; }
.pill.blue { background: #4a96b3; }
.pill.green { background: #00b180; color: #d5f5ea; }
.filterpill { width: 123px; height: 17px; margin: 6px 0 0 -1px; padding-left: 9px; }
.marktype { height: 18px; margin: 8px 1px 0 0; border: 1px solid #d4d4d4; display: flex; align-items: center; padding-left: 8px; gap: 3px; color: #555; background: #fafafa; }
.marktype svg { width: 7px; height: 7px; }
.mtcaret { margin-left: auto; width: 15px; height: 100%; border-left: 1px solid #d4d4d4; display: flex; align-items: center; justify-content: center; }
.markgrid { display: grid; grid-template-columns: 37px 38px 37px; gap: 4px; margin-top: 5px; }
.mbtn { height: 36px; border: 1px solid #ddd; background: #fafafa; display: flex; flex-direction: column; align-items: center; justify-content: space-between; font-size: 9px; line-height: 12px; padding: 4px 0 1px; white-space: nowrap; }
.mbtn svg { width: 13px; height: 13px; }
.markpill { display: flex; align-items: center; gap: 4px; margin: 5px 0 0 7px; }
.markpill svg { width: 10px; height: 10px; }
.mp { width: 96px; height: 17px; padding-left: 10px; }
.plus { width: 6px; height: 6px; border: 1px solid #dceaf0; margin-right: 5px; flex: none; background: linear-gradient(#dceaf0,#dceaf0) center/1px 100% no-repeat; }

/* center */
.center { width: 840px; flex: none; display: flex; flex-direction: column; }
.shelf { height: 20px; margin-top: 1px; background: #fafafa; border-top: 1px solid #e2e2e2; border-bottom: 1px solid #e2e2e2; display: flex; align-items: center; width: 980px; margin-bottom: 4px; }
.shelf.first .shelfpill { margin-bottom: 2px; }
.shelflabel { width: 108px; height: 100%; border-right: 1px solid #e2e2e2; border-left: 1px solid #e2e2e2; display: flex; align-items: center; gap: 5px; padding-left: 5px; color: #555; font-size: 10px; margin-right: 1px; flex: none; }
.shelflabel svg { width: 8px; height: 8px; }
.shelfpill { width: 120px; height: 17px; padding-left: 10px; margin-right: 3px; flex: none; }
.shelfpill .plus { margin-right: 4px; }
.sheet { height: 526px; background: #fff; border: 1px solid #c8c8c8; display: flex; flex-direction: column; }
.sheettitle { font-family: "Liberation Serif", "Noto Sans CJK SC", serif; font-size: 16.500px; line-height: 20px; padding: 11px 0 0 8px; color: #6c7b8c; height: 32px; letter-spacing: .5px; flex: none; }
.headtitle { margin-left: 50px; width: 783px; text-align: center; font-size: 10.500px; line-height: 12px; color: #808080; height: 22px; flex: none; padding-top: 10px; }
.headtitle em { font-style: normal; padding: 0 1px; }
.chart { display: flex; height: 450px; flex: none; position: relative; }
.yaxis { width: 50px; flex: none; display: flex; flex-direction: column; }
.yhead { height: 27px; margin-left: 6px; border-bottom: 1px solid #d2d2d2; flex: none; }
.yplot { height: 383px; flex: none; display: flex; }
.yfoot { flex: 1; margin-left: 6px; border-top: 1px solid #d2d2d2; }
.ytitle { writing-mode: vertical-rl; text-orientation: sideways; transform: rotate(180deg); align-self: center; font-size: 9px; line-height: 12px; color: #666; margin: 5px 0 0 13px; width: 12px; white-space: nowrap; flex: none; }
.yticks { flex: 1; display: flex; flex-direction: column; justify-content: flex-end; gap: 22.400px; padding-right: 5px; text-align: right; color: #999; font-size: 11px; }
.yticks span { height: 14px; line-height: 14px; }
.yticks .zero { margin-top: -7px; }
.cols { display: flex; width: 783px; flex: none; border-left: none; }
.col { width: 13.500px; flex: none; display: flex; flex-direction: column; border-left: 1px solid #d2d2d2; }
.col:nth-child(odd) { border-left-color: #e4e4e4; }
.dot { height: 27px; border-bottom: 1px solid #d2d2d2; flex: none; position: relative; }
.dot::after { content: ""; position: absolute; left: 5px; bottom: 3px; width: 1.500px; height: 1px; background: #999; }
.plot { height: 383px; flex: none; display: flex; align-items: flex-end; background: repeating-linear-gradient(to top, #f0f0f0 0, #f0f0f0 1px, transparent 1px, transparent 36.400px); }
.bar { width: 10.500px; margin-left: 1px; background: #4f79a7; flex: none; }
.bar.sel { width: 12px; margin-left: 0; outline: 1px solid #111; outline-offset: -1px; }
.foot { flex: 1; border-top: 1px solid #d2d2d2; }
.nullbadge { position: absolute; right: 9px; top: 389px; width: 57px; height: 17px; line-height: 17px; text-align: center; background: rgba(140,140,140,.8); color: #fff; font-size: 11px; font-weight: 700; border-radius: 2px; }
.hscroll { height: 14px; margin: 3px 6px 0 50px; background: #efefef; display: flex; align-items: center; flex: none; position: relative; }
.harrow { width: 14px; height: 14px; display: flex; align-items: center; justify-content: center; flex: none; }
.harrow svg { width: 6px; height: 8px; }
.harrow.end { margin-left: auto; }
.hthumb { width: 205px; height: 14px; background: #c8c8c8; flex: none; }

/* tabs + status */
.tabbar { height: 25px; flex: none; background: #e6e6e6; border-top: 1px solid #d8d8d8; border-bottom: 1px solid #d4d4d4; display: flex; align-items: stretch; }
.dstab { width: 110px; display: flex; align-items: center; gap: 4px; padding-left: 7px; color: #888; font-size: 10px; }
.dstab svg { width: 6px; height: 9px; }
.sheettab { width: 51px; background: #fafafa; border-left: 1px solid #d8d8d8; display: flex; align-items: center; justify-content: center; color: #777; font-size: 10px; }
.newtab { width: 22px; border-right: 1px solid #d4d4d4; display: flex; align-items: center; justify-content: center; background: #e8e8e8; }
.newtab svg { width: 12px; height: 12px; }
.statusbar { height: 18px; flex: none; background: #ededed; display: flex; align-items: center; font-size: 9.500px; color: #444; position: relative; padding-left: 2px; }
.st1 { width: 63px; flex: none; }
.st2 { width: 76px; flex: none; white-space: pre; }
.st3 { flex: none; }
.stsp { flex: 1; }
.stdiv { width: 1px; height: 100%; background: #d4d4d4; flex: none; }
.d1 { margin-right: 105px; }
.d2 { margin-right: 21px; }
.d3 { margin-right: 21px; }
.d4 { margin-right: 133px; }
.stnav { position: absolute; left: 1208px; top: 5px; width: 78px; height: 8px; }
.stsquare { position: absolute; right: 4px; top: 4px; width: 8px; height: 8px; background: #666; }

/* overlays */
.upload { position: absolute; left: 1097px; top: 11px; width: 108px; height: 27px; border: 1px solid #1a9bf5; border-radius: 7px; display: flex; overflow: hidden; background: #eaf6ff; }
.upicon { width: 30px; flex: none; background: #0a96fb; display: flex; align-items: center; justify-content: center; }
.upicon svg { width: 20px; height: 16px; }
.uptext { flex: 1; text-align: center; line-height: 25px; color: #35a5ee; font-size: 10.500px; }
.showme { position: absolute; left: 1121px; top: 41px; width: 172px; height: 491px; }
.smtab { position: absolute; left: 86px; top: 0; width: 76px; height: 31px; background: #f9f9f9; border: 1px solid #e4e4e4; border-bottom: none; display: flex; align-items: center; gap: 4px; padding: 0 0 7px 8px; font-size: 11.500px; color: #333; z-index: 1; }
.smtab svg { width: 10px; height: 12px; }
.smbody { position: absolute; left: 0; top: 30px; width: 172px; height: 461px; background: #f9f9f9; box-shadow: 1px 1px 3px rgba(0,0,0,.35); border-left: 1px solid #e4e4e4; padding: 12px 0 0 11px; }
.tiles { display: grid; grid-template-columns: repeat(3, 46px); column-gap: 4.600px; row-gap: 3.800px; }
.tile { height: 34.500px; background: #fff; border: 1px solid #e8e8e8; }
.tile svg { width: 100%; height: 100%; }
.tile.selected { border: 1px solid #e3692d; outline: 1px solid #e3692d; outline-offset: -1px; }
.smhints { margin-top: 13px; font-size: 10px; color: #333; }
.smhints p { height: 23.300px; display: flex; align-items: center; gap: 3px; white-space: pre; }
.smhints p:first-child { height: 19px; }
.globe { width: 8px; height: 8px; margin: 0 1px 0 2px; }
.hp { width: 41px; height: 17px; justify-content: center; }
.smnote { margin-top: 5px; width: 148px; font-size: 10px; line-height: 14px; color: #888; }

.tooltip { position: absolute; left: 454px; top: 585px; width: 111px; height: 64px; background: #fff; box-shadow: 1px 1px 3px rgba(0,0,0,.4); padding: 5px 0 0 6px; font-size: 10.500px; line-height: 18px; color: #444; letter-spacing: .6px; }
.tiprow { display: flex; white-space: nowrap; }
.tipk { width: 57px; color: #999; flex: none; }
.tiprow strong { font-weight: 700; color: #333; }

.wm { position: absolute; left: 68px; display: flex; flex-direction: column; align-items: center; width: 32px; font-family: "Noto Sans CJK SC", sans-serif; font-size: 31px; line-height: 32px; color: rgba(255,255,255,.55); -webkit-text-stroke: 1px #b7addf; }
.wm span { display: block; height: 31px; }
.wm1 { top: 181px; }
.wm1 .drop { margin-top: 3px; }
.wm1 .squeeze { height: 20px; line-height: 22px; font-size: 25px; margin-top: 4px; }
.wm2 { top: 441px; }
.wm2 span:last-child { -webkit-text-stroke-color: #bdbdbd; }
.csdn { position: absolute; left: 1186px; top: 671px; font-size: 13.500px; line-height: 18px; color: rgba(90,90,90,.65); -webkit-text-stroke: .2px #777; white-space: nowrap; }
```
